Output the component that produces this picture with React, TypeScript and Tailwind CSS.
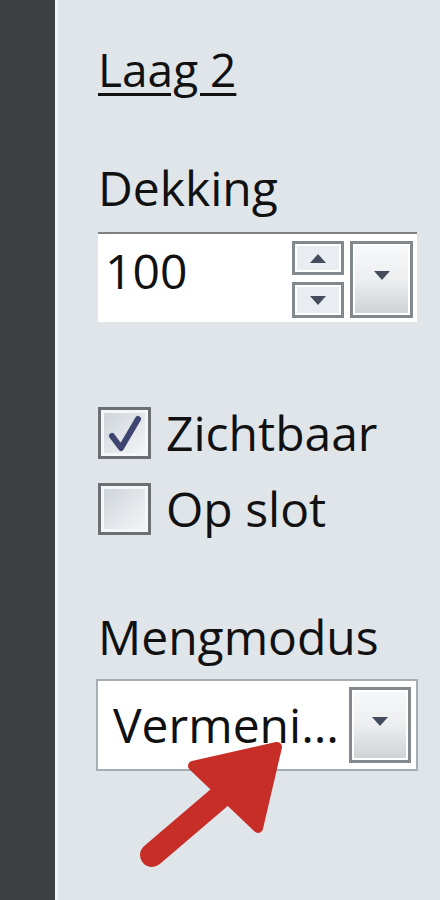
import type { ReactNode } from 'react'

const font = "font-['Open_Sans',_'Noto_Sans',_sans-serif]"

function Triangle({ up = false, size = 16 }: { up?: boolean; size?: number }) {
  return (
    <svg width={size} height={size / 2 + 1} viewBox="0 0 16 9">
      {up ? (
        <path d="M0 9 L8 0 L16 9 Z" fill="#454c5e" />
      ) : (
        <path d="M0 0 L16 0 L8 9 Z" fill="#454c5e" />
      )}
    </svg>
  )
}

function SpinButton({ children, className }: { children: ReactNode; className: string }) {
  return (
    <div className={`border-[3px] border-[#83888d] ${className}`}>
      <div className="flex h-full w-full items-center justify-center border-2 border-white bg-[#e9edf1]">
        {children}
      </div>
    </div>
  )
}

function DropButton({ className }: { className: string }) {
  return (
    <div className={`border-[3px] border-[#83888d] ${className}`}>
      <div className="flex h-full w-full items-start justify-center border-2 border-white bg-gradient-to-b from-[#f7f8f9] via-[#eceef0] to-[#cfd3d6] pt-[25px]">
        <Triangle />
      </div>
    </div>
  )
}

function Checkbox({ checked }: { checked: boolean }) {
  return (
    <div className="h-[52px] w-[53px] shrink-0 border-[3px] border-[#6c7074]">
      <div className="relative h-full w-full border-[3px] border-[#f4f6f8] bg-gradient-to-br from-[#cfd5db] to-[#f3f5f7]">
        {checked && (
          <svg className="absolute left-[-6px] top-[-6px]" width="53" height="52" viewBox="0 0 53 52">
            <path
              d="M14 29 L23 41 L40 12"
              fill="none"
              stroke="#3d4570"
              strokeWidth="6"
              strokeLinecap="round"
              strokeLinejoin="round"
            />
          </svg>
        )}
      </div>
    </div>
  )
}

export default function App() {
  return (
    <div className={`relative flex h-[900px] w-[440px] overflow-hidden bg-[#dfe5e9] font-medium text-[#111] ${font}`}>
      <div className="w-[55px] shrink-0 bg-[#3e4143]" />
      <div className="w-[3px] shrink-0 bg-[#f0f4f6]" />
      <div className="flex flex-1 flex-col pl-[40px]">
        <div className="mt-[46px] text-[46px] leading-none underline decoration-[3px] underline-offset-[6px]">
          Laag 2
        </div>

        <div className="mt-[72px] text-[48px] leading-none">Dekking</div>

        <div className="mt-[20px] flex h-[90px] w-[319px] border-t-2 border-[#7d8185] bg-white">
          <div className="flex-1 pl-[7px] pt-[13px] text-[48px] leading-none">100</div>
          <div className="flex flex-col gap-[7px] pt-[7px]">
            <SpinButton className="h-[34px] w-[52px]">
              <Triangle up />
            </SpinButton>
            <SpinButton className="h-[36px] w-[52px]">
              <Triangle />
            </SpinButton>
          </div>
          <DropButton className="ml-[6px] mr-[4px] mt-[7px] h-[77px] w-[63px]" />
        </div>

        <div className="mt-[85px] flex items-center gap-[15px]">
          <Checkbox checked />
          <span className="text-[48px] leading-none">Zichtbaar</span>
        </div>
        <div className="mt-[24px] flex items-center gap-[15px]">
          <Checkbox checked={false} />
          <span className="text-[48px] leading-none">Op slot</span>
        </div>

        <div className="mt-[78px] text-[48px] leading-none">Mengmodus</div>

        <div className="-ml-[2px] mt-[18px] flex h-[92px] w-[322px] border-2 border-[#a7aeb3] bg-white">
          <div className="flex-1 pl-[15px] pt-[20px] text-[48px] leading-none">Vermeni...</div>
          <DropButton className="mr-[5px] mt-[6px] h-[76px] w-[62px]" />
        </div>
      </div>

      <svg className="pointer-events-none absolute left-0 top-0" width="440" height="900" viewBox="0 0 440 900">
        <path d="M152 855 L248 773" stroke="#c62e27" strokeWidth="24" strokeLinecap="round" />
        <path
          d="M193 766 L277 747 L258 828 Z"
          fill="#c62e27"
          stroke="#c62e27"
          strokeWidth="10"
          strokeLinejoin="round"
        />
      </svg>
    </div>
  )
}
